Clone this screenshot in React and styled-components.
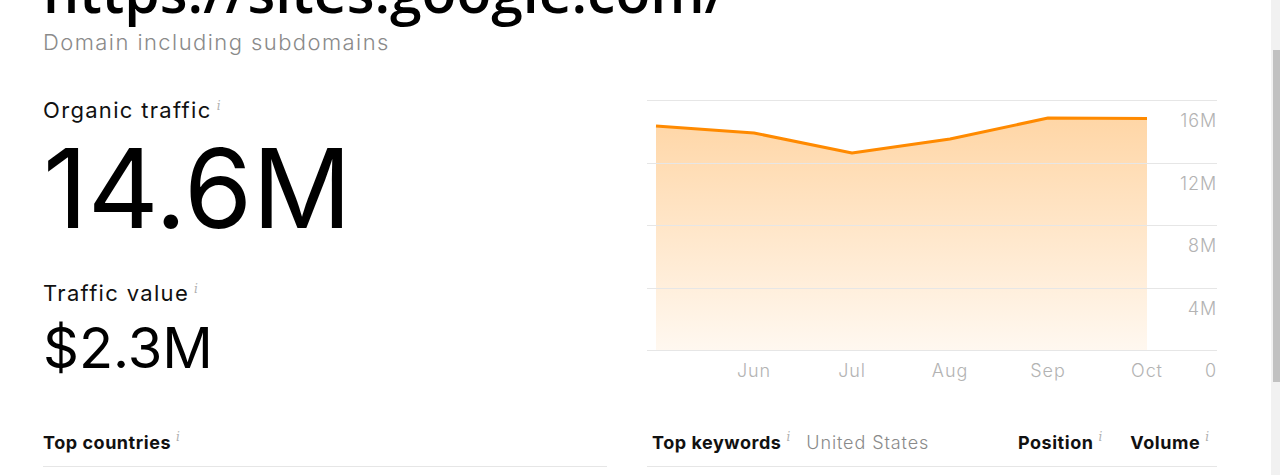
import React from 'react'
import styled, { createGlobalStyle } from 'styled-components'

const GlobalStyle = createGlobalStyle`
  html, body {
    margin: 0;
    padding: 0;
    background: #fff;
    overflow: hidden;
  }
  body {
    font-family: Inter, "Liberation Sans", sans-serif;
    color: #111;
  }
`

const points = [
  [9, 26], [107, 33], [205, 53], [303, 39], [401, 18], [500, 18.5],
]
const gridY = [0, 63, 125, 188, 250]
const yLabels = [
  { text: '16M', y: 27 },
  { text: '12M', y: 90 },
  { text: '8M', y: 152 },
  { text: '4M', y: 215 },
  { text: '0', y: 277 },
]
const months = [
  { text: 'Jun', x: 107 },
  { text: 'Jul', x: 205 },
  { text: 'Aug', x: 303 },
  { text: 'Sep', x: 401 },
  { text: 'Oct', x: 500 },
]

const Info = () => <InfoMark>i</InfoMark>

const TrafficChart = () => {
  const line = points.map(([x, y], i) => `${i ? 'L' : 'M'}${x} ${y}`).join(' ')
  const area = `${line} L500 250 L9 250 Z`
  return (
    <ChartSvg width="570" height="290" viewBox="0 0 570 290">
      <defs>
        <linearGradient id="areaFill" x1="0" y1="0" x2="0" y2="1">
          <stop offset="0" stopColor="#ffd6a6" />
          <stop offset="1" stopColor="#fff8f0" />
        </linearGradient>
      </defs>
      <path d={area} fill="url(#areaFill)" />
      {gridY.map((y) => (
        <line key={y} x1="0" x2="570" y1={y + 0.5} y2={y + 0.5} stroke="#e6e6e6" strokeWidth="1" />
      ))}
      <path d={line} fill="none" stroke="#ff8a00" strokeWidth="3" strokeLinejoin="round" />
      {yLabels.map((l) => (
        <AxisText key={l.text} x="570" y={l.y} textAnchor="end">
          {l.text}
        </AxisText>
      ))}
      {months.map((m) => (
        <AxisText key={m.text} x={m.x} y="277" textAnchor="middle">
          {m.text}
        </AxisText>
      ))}
    </ChartSvg>
  )
}

const App = () => {
  return (
    <Page>
      <GlobalStyle />
      <Main>
        <Title>https://sites.google.com/</Title>
        <Subtitle>Domain including subdomains</Subtitle>
        <Overview>
          <Metrics>
            <MetricLabel>Organic traffic<Info /></MetricLabel>
            <BigValue>14.6M</BigValue>
            <MetricLabel $top={31}>Traffic value<Info /></MetricLabel>
            <Value>$2.3M</Value>
          </Metrics>
          <TrafficChart />
        </Overview>
        <Tables>
          <TableHead>
            <HeadCell>Top countries<Info /></HeadCell>
          </TableHead>
          <TableHead $pad={5}>
            <HeadCell>Top keywords<Info /></HeadCell>
            <Country>United States</Country>
            <HeadCell $right>Position<Info /></HeadCell>
            <HeadCell>Volume<Info /></HeadCell>
          </TableHead>
        </Tables>
      </Main>
      <ScrollTrack>
        <ScrollThumb />
      </ScrollTrack>
    </Page>
  )
}

const Page = styled.div`
  display: flex;
  width: 1280px;
  height: 475px;
  overflow: hidden;
`
const Main = styled.main`
  flex: 1;
  padding: 0 54px 0 43px;
`
const Title = styled.h1`
  margin: -39px 0 0;
  font-family: "Open Sans", sans-serif;
  font-size: 57px;
  font-weight: 600;
  line-height: 60px;
  color: #000;
  white-space: nowrap;
`
const Subtitle = styled.div`
  margin-top: 7px;
  font-size: 22px;
  font-weight: 300;
  line-height: 28px;
  letter-spacing: 0.065em;
  color: #8a8a8a;
`
const Overview = styled.section`
  display: grid;
  grid-template-columns: 564px 570px;
  column-gap: 40px;
  margin-top: 40px;
`
const Metrics = styled.div`
  display: flex;
  flex-direction: column;
  align-items: flex-start;
`
const MetricLabel = styled.div`
  margin-top: ${(p) => p.$top || 0}px;
  font-size: 22px;
  line-height: 28px;
  letter-spacing: 0.06em;
  color: #111;
`
const InfoMark = styled.sup`
  margin-left: 5px;
  font-family: "DejaVu Serif", serif;
  font-style: italic;
  font-size: 12px;
  font-weight: 400;
  letter-spacing: 0;
  color: #b0b0b0;
  vertical-align: 8px;
  line-height: 0;
`
const BigValue = styled.div`
  margin-top: 4px;
  font-size: 110px;
  font-weight: 400;
  line-height: 120px;
  color: #000;
`
const Value = styled.div`
  margin-top: 9px;
  font-size: 56px;
  line-height: 64px;
  color: #000;
`
const ChartSvg = styled.svg`
  display: block;
  margin-top: 4px;
  font-family: Inter, "Liberation Sans", sans-serif;
`
const AxisText = styled.text`
  fill: #b3b3b3;
  font-size: 18px;
  font-weight: 300;
  letter-spacing: 0.05em;
`
const Tables = styled.section`
  display: grid;
  grid-template-columns: 564px 570px;
  column-gap: 40px;
  margin-top: 28px;
`
const TableHead = styled.div`
  display: flex;
  align-items: center;
  height: 48px;
  border-bottom: 1px solid #e6e6e6;
  padding: 0 8px 0 ${(p) => p.$pad || 0}px;
`
const HeadCell = styled.div`
  font-size: 18px;
  font-weight: 700;
  letter-spacing: 0.03em;
  color: #111;
  margin-left: ${(p) => (p.$right ? 'auto' : '0')};
  margin-right: ${(p) => (p.$right ? '28px' : '0')};
`
const Country = styled.div`
  margin-left: 16px;
  font-size: 18px;
  font-weight: 300;
  letter-spacing: 0.05em;
  color: #8a8a8a;
`
const ScrollTrack = styled.div`
  width: 9px;
  background: #f1f1f1;
  padding-top: 50px;
`
const ScrollThumb = styled.div`
  width: 7px;
  margin-left: 2px;
  height: 332px;
  background: #c1c1c1;
`

export default App
